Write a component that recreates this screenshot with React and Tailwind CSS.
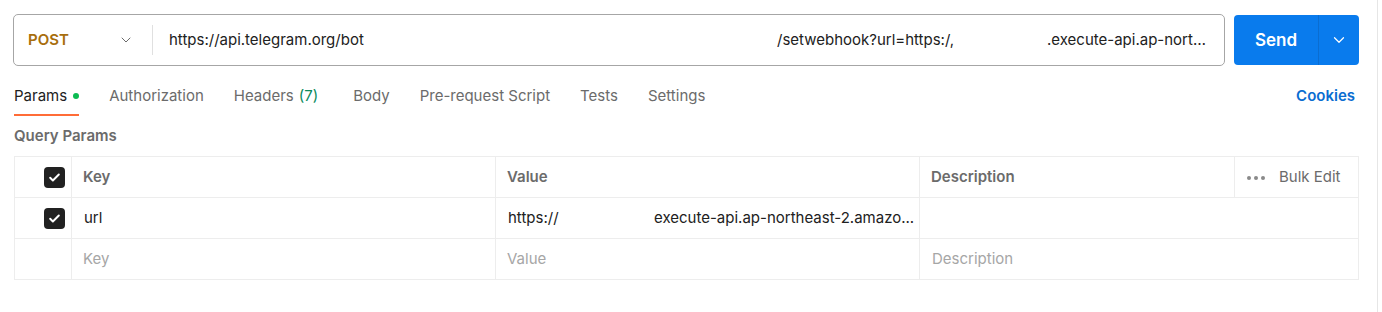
import React from 'react';
import { ChevronDown } from 'lucide-react';

const font = { fontFamily: 'Inter, "Noto Sans", sans-serif' };

const Check = () => (
  <div className="w-[21px] h-[21px] rounded-[4px] bg-[#212121] flex items-center justify-center">
    <svg width="13" height="13" viewBox="0 0 24 24" fill="none">
      <path d="M4 12.5l5 5L20 6.5" stroke="#fff" strokeWidth="3.6" strokeLinecap="round" strokeLinejoin="round" />
    </svg>
  </div>
);

const tabs = [
  { label: 'Authorization' },
  { label: 'Headers', count: '(7)' },
  { label: 'Body' },
  { label: 'Pre-request Script' },
  { label: 'Tests' },
  { label: 'Settings' },
];

const App = () => {
  return (
    <div className="flex bg-white h-[312px]" style={font}>
      <div className="w-[1378px] shrink-0 border-r border-[#e6e6e6] pt-[14px] pl-[13px] pr-[18px] text-[15px]">
        {/* URL bar */}
        <div className="flex gap-[9px]">
          <div className="w-[1212px] shrink-0 h-[52px] border border-[#a6a6a6] rounded-[5px] flex items-center">
            <div className="w-[139px] h-[30px] flex items-center pl-[14px] border-r border-[#e0e0e0]">
              <span className="font-semibold text-[#a86e0c] w-[90px]">POST</span>
              <ChevronDown size={16} strokeWidth={1.5} className="text-[#6b6b6b]" />
            </div>
            <div className="flex items-center pl-[16px] text-[#212121] min-w-0">
              <span className="w-[608px] shrink-0">https://api.telegram.org/bot</span>
              <span className="w-[270px] shrink-0">/setwebhook?url=https:/,</span>
              <span className="w-[166px] shrink-0 truncate">.execute-api.ap-northeast-2.amazonaws.com</span>
            </div>
          </div>
          <div className="w-[125px] shrink-0 h-[50px] mt-[1px] bg-[#097bed] rounded-[4px] flex text-white">
            <div className="flex-1 flex items-center justify-center pt-[1px] font-semibold text-[17px] border-r border-[#0a6dd1]">
              Send
            </div>
            <div className="w-[40px] flex items-center justify-center">
              <ChevronDown size={18} strokeWidth={1.6} />
            </div>
          </div>
        </div>

        {/* Tabs */}
        <div className="flex items-stretch justify-between h-[40px] mt-[10px] pl-[1px] pr-[4px]">
          <div className="flex items-stretch gap-[30px]">
            <div className="relative flex items-center text-[#212121]">
              Params
              <span className="ml-[6px] w-[6px] h-[6px] rounded-full bg-[#0cbb52]" />
              <span className="absolute left-0 right-0 bottom-0 h-[2px] bg-[#ff6c37]" />
            </div>
            {tabs.map((t) => (
              <div key={t.label} className={`flex items-center text-[#6b6b6b] ${t.count ? 'mr-[5px]' : ''}`}>
                {t.label}
                {t.count && <span className="ml-[5px] text-[#0a8a5c]">{t.count}</span>}
              </div>
            ))}
          </div>
          <div className="flex items-center text-[#0a6dd1] font-semibold">Cookies</div>
        </div>

        <div className="mt-[10px] pl-[1px] h-[20px] flex items-center font-semibold text-[#6b6b6b]">Query Params</div>

        {/* Table */}
        <div className="mt-[10px] ml-[1px] border border-[#ededed] w-[1345px]">
          <div className="grid grid-cols-[57px_424px_424px_315px_1fr] h-[41px] border-b border-[#ededed]">
            <div className="flex items-center justify-end pr-[6px] border-r border-[#ededed]"><Check /></div>
            <div className="flex items-center pl-[11px] pt-[1px] border-r border-[#ededed] font-semibold text-[#6b6b6b]">Key</div>
            <div className="flex items-center pl-[11px] pt-[1px] border-r border-[#ededed] font-semibold text-[#6b6b6b]">Value</div>
            <div className="flex items-center pl-[11px] pt-[1px] border-r border-[#ededed] font-semibold text-[#6b6b6b]">Description</div>
            <div className="flex items-center pl-[12px] pt-[1px] text-[#6b6b6b]">
              <span className="flex gap-[3px] mr-[14px]">
                <span className="w-[4px] h-[4px] rounded-full bg-[#8a8a8a]" />
                <span className="w-[4px] h-[4px] rounded-full bg-[#8a8a8a]" />
                <span className="w-[4px] h-[4px] rounded-full bg-[#8a8a8a]" />
              </span>
              Bulk Edit
            </div>
          </div>
          <div className="grid grid-cols-[57px_424px_424px_1fr] h-[41px] border-b border-[#ededed]">
            <div className="flex items-center justify-end pr-[6px] border-r border-[#ededed]"><Check /></div>
            <div className="flex items-center pl-[12px] border-r border-[#ededed] text-[#212121]">url</div>
            <div className="flex items-center pl-[12px] border-r border-[#ededed] text-[#212121] whitespace-nowrap">
              <span className="w-[146px] shrink-0">https://</span>
              <span>execute-api.ap-northeast-2.amazo...</span>
            </div>
            <div />
          </div>
          <div className="grid grid-cols-[57px_424px_424px_1fr] h-[40px] text-[#a6a6a6]">
            <div className="border-r border-[#ededed]" />
            <div className="flex items-center pl-[11px] border-r border-[#ededed]">Key</div>
            <div className="flex items-center pl-[11px] border-r border-[#ededed]">Value</div>
            <div className="flex items-center pl-[12px]">Description</div>
          </div>
        </div>
      </div>
    </div>
  );
};

export default App;
